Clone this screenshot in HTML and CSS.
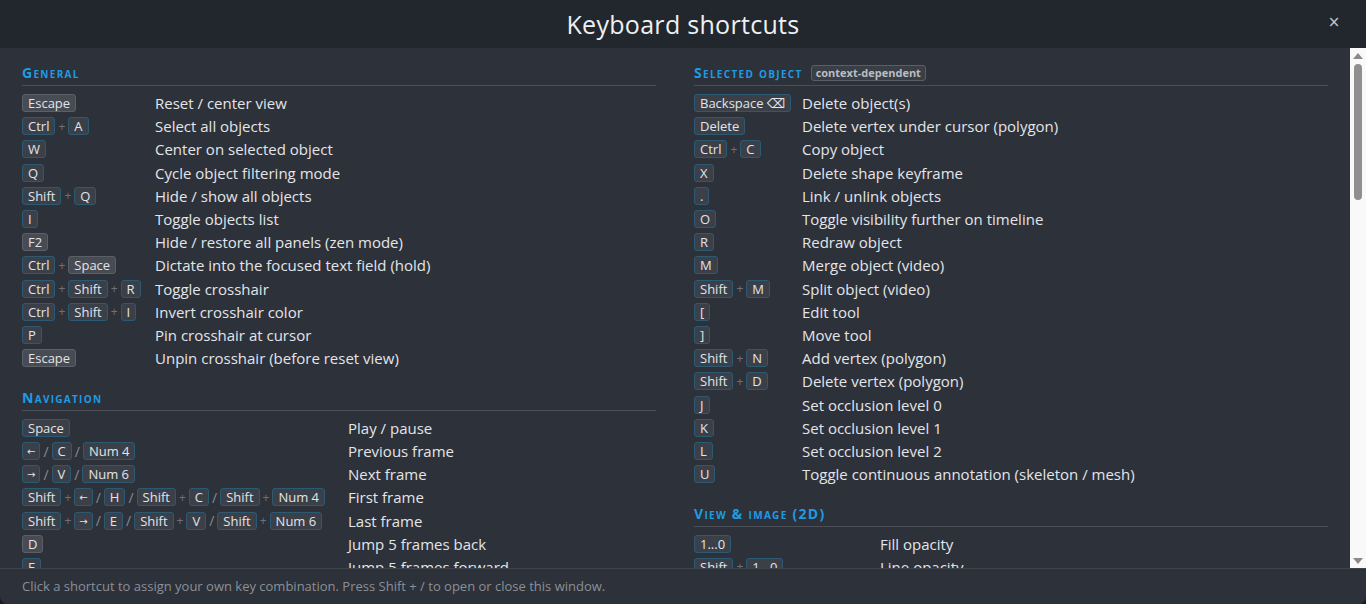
FILE: index.html
```html
<!DOCTYPE html>
<html lang="en">
<head>
<meta charset="utf-8">
<title>Keyboard shortcuts</title>
<link rel="stylesheet" href="styles.css">
</head>
<body>
<div class="modal">
  <header class="modal-head">
    <h1 class="modal-title">Keyboard shortcuts</h1>
    <button class="modal-close" type="button" aria-label="Close">×</button>
  </header>

  <div class="modal-main">
  <main class="modal-body">
    <div class="columns">
      <div class="column">

        <section class="group group-general">
          <h2 class="group-title">General</h2>
          <div class="rows">
            <div class="combo"><kbd class="key key-plain">Escape</kbd></div><div class="desc">Reset / center view</div>
            <div class="combo"><kbd class="key">Ctrl</kbd><span class="plus">+</span><kbd class="key">A</kbd></div><div class="desc">Select all objects</div>
            <div class="combo"><kbd class="key">W</kbd></div><div class="desc">Center on selected object</div>
            <div class="combo"><kbd class="key">Q</kbd></div><div class="desc">Cycle object filtering mode</div>
            <div class="combo"><kbd class="key">Shift</kbd><span class="plus">+</span><kbd class="key">Q</kbd></div><div class="desc">Hide / show all objects</div>
            <div class="combo"><kbd class="key">I</kbd></div><div class="desc">Toggle objects list</div>
            <div class="combo"><kbd class="key key-plain">F2</kbd></div><div class="desc">Hide / restore all panels (zen mode)</div>
            <div class="combo"><kbd class="key">Ctrl</kbd><span class="plus">+</span><kbd class="key key-plain">Space</kbd></div><div class="desc">Dictate into the focused text field (hold)</div>
            <div class="combo"><kbd class="key">Ctrl</kbd><span class="plus">+</span><kbd class="key">Shift</kbd><span class="plus">+</span><kbd class="key">R</kbd></div><div class="desc">Toggle crosshair</div>
            <div class="combo"><kbd class="key">Ctrl</kbd><span class="plus">+</span><kbd class="key">Shift</kbd><span class="plus">+</span><kbd class="key">I</kbd></div><div class="desc">Invert crosshair color</div>
            <div class="combo"><kbd class="key">P</kbd></div><div class="desc">Pin crosshair at cursor</div>
            <div class="combo"><kbd class="key key-plain">Escape</kbd></div><div class="desc">Unpin crosshair (before reset view)</div>
          </div>
        </section>

        <section class="group group-nav">
          <h2 class="group-title">Navigation</h2>
          <div class="rows">
            <div class="combo"><kbd class="key">Space</kbd></div><div class="desc">Play / pause</div>
            <div class="combo"><kbd class="key key-arrow">←</kbd><span class="or">/</span><kbd class="key">C</kbd><span class="or">/</span><kbd class="key">Num 4</kbd></div><div class="desc">Previous frame</div>
            <div class="combo"><kbd class="key key-arrow">→</kbd><span class="or">/</span><kbd class="key">V</kbd><span class="or">/</span><kbd class="key">Num 6</kbd></div><div class="desc">Next frame</div>
            <div class="combo"><kbd class="key">Shift</kbd><span class="plus">+</span><kbd class="key key-arrow">←</kbd><span class="or">/</span><kbd class="key">H</kbd><span class="or">/</span><kbd class="key">Shift</kbd><span class="plus">+</span><kbd class="key">C</kbd><span class="or">/</span><kbd class="key">Shift</kbd><span class="plus">+</span><kbd class="key">Num 4</kbd></div><div class="desc">First frame</div>
            <div class="combo"><kbd class="key">Shift</kbd><span class="plus">+</span><kbd class="key key-arrow">→</kbd><span class="or">/</span><kbd class="key">E</kbd><span class="or">/</span><kbd class="key">Shift</kbd><span class="plus">+</span><kbd class="key">V</kbd><span class="or">/</span><kbd class="key">Shift</kbd><span class="plus">+</span><kbd class="key">Num 6</kbd></div><div class="desc">Last frame</div>
            <div class="combo"><kbd class="key key-plain">D</kbd></div><div class="desc">Jump 5 frames back</div>
            <div class="combo"><kbd class="key">F</kbd></div><div class="desc">Jump 5 frames forward</div>
            <div class="combo"><kbd class="key">Home</kbd></div><div class="desc">Go to first frame of track</div>
            <div class="combo"><kbd class="key">End</kbd></div><div class="desc">Go to last frame of track</div>
            <div class="combo"><kbd class="key">Ctrl</kbd><span class="plus">+</span><kbd class="key">G</kbd></div><div class="desc">Go to frame</div>
            <div class="combo"><kbd class="key">Alt</kbd><span class="plus">+</span><kbd class="key key-arrow">←</kbd></div><div class="desc">Previous keyframe</div>
            <div class="combo"><kbd class="key">Alt</kbd><span class="plus">+</span><kbd class="key key-arrow">→</kbd></div><div class="desc">Next keyframe</div>
          </div>
        </section>

        <section class="group group-short">
          <h2 class="group-title">Playback</h2>
          <div class="rows">
            <div class="combo"><kbd class="key">Ctrl</kbd><span class="plus">+</span><kbd class="key key-arrow">↑</kbd></div><div class="desc">Increase playback speed</div>
            <div class="combo"><kbd class="key">Ctrl</kbd><span class="plus">+</span><kbd class="key key-arrow">↓</kbd></div><div class="desc">Decrease playback speed</div>
            <div class="combo"><kbd class="key">Ctrl</kbd><span class="plus">+</span><kbd class="key">0</kbd></div><div class="desc">Reset playback speed</div>
            <div class="combo"><kbd class="key">Shift</kbd><span class="plus">+</span><kbd class="key">Space</kbd></div><div class="desc">Play backwards</div>
            <div class="combo"><kbd class="key">B</kbd></div><div class="desc">Toggle frame bookmark</div>
            <div class="combo"><kbd class="key">Shift</kbd><span class="plus">+</span><kbd class="key">B</kbd></div><div class="desc">Next bookmark</div>
          </div>
        </section>

        <section class="group group-short">
          <h2 class="group-title">Timeline</h2>
          <div class="rows">
            <div class="combo"><kbd class="key">Ctrl</kbd><span class="plus">+</span><kbd class="key">K</kbd></div><div class="desc">Add keyframe</div>
            <div class="combo"><kbd class="key">Ctrl</kbd><span class="plus">+</span><kbd class="key">Shift</kbd><span class="plus">+</span><kbd class="key">K</kbd></div><div class="desc">Remove keyframe</div>
            <div class="combo"><kbd class="key">Alt</kbd><span class="plus">+</span><kbd class="key">O</kbd></div><div class="desc">Mark object outside</div>
            <div class="combo"><kbd class="key">Ctrl</kbd><span class="plus">+</span><kbd class="key">T</kbd></div><div class="desc">Toggle timeline panel</div>
            <div class="combo"><kbd class="key">Ctrl</kbd><span class="plus">+</span><kbd class="key">=</kbd></div><div class="desc">Zoom timeline in</div>
            <div class="combo"><kbd class="key">Ctrl</kbd><span class="plus">+</span><kbd class="key">-</kbd></div><div class="desc">Zoom timeline out</div>
            <div class="combo"><kbd class="key">Alt</kbd><span class="plus">+</span><kbd class="key">Home</kbd></div><div class="desc">Jump to object start</div>
            <div class="combo"><kbd class="key">Alt</kbd><span class="plus">+</span><kbd class="key">End</kbd></div><div class="desc">Jump to object end</div>
            <div class="combo"><kbd class="key">Ctrl</kbd><span class="plus">+</span><kbd class="key">J</kbd></div><div class="desc">Interpolate between keyframes</div>
            <div class="combo"><kbd class="key">Alt</kbd><span class="plus">+</span><kbd class="key">J</kbd></div><div class="desc">Propagate object forward</div>
          </div>
        </section>

        <section class="group group-short">
          <h2 class="group-title">Interface</h2>
          <div class="rows">
            <div class="combo"><kbd class="key">F1</kbd></div><div class="desc">Open help</div>
            <div class="combo"><kbd class="key">F3</kbd></div><div class="desc">Toggle labels panel</div>
            <div class="combo"><kbd class="key">F4</kbd></div><div class="desc">Toggle attributes panel</div>
            <div class="combo"><kbd class="key">F11</kbd></div><div class="desc">Full screen</div>
            <div class="combo"><kbd class="key">Ctrl</kbd><span class="plus">+</span><kbd class="key">,</kbd></div><div class="desc">Open settings</div>
            <div class="combo"><kbd class="key">Ctrl</kbd><span class="plus">+</span><kbd class="key">S</kbd></div><div class="desc">Save annotations</div>
            <div class="combo"><kbd class="key">Ctrl</kbd><span class="plus">+</span><kbd class="key">Z</kbd></div><div class="desc">Undo</div>
            <div class="combo"><kbd class="key">Ctrl</kbd><span class="plus">+</span><kbd class="key">Shift</kbd><span class="plus">+</span><kbd class="key">Z</kbd></div><div class="desc">Redo</div>
            <div class="combo"><kbd class="key">Ctrl</kbd><span class="plus">+</span><kbd class="key">Y</kbd></div><div class="desc">Redo (alternative)</div>
            <div class="combo"><kbd class="key">Shift</kbd><span class="plus">+</span><kbd class="key">/</kbd></div><div class="desc">Open / close this window</div>
          </div>
        </section>

      </div>
      <div class="column">

        <section class="group group-selected">
          <h2 class="group-title">Selected object <span class="badge">context-dependent</span></h2>
          <div class="rows">
            <div class="combo"><kbd class="key">Backspace ⌫</kbd></div><div class="desc">Delete object(s)</div>
            <div class="combo"><kbd class="key">Delete</kbd></div><div class="desc">Delete vertex under cursor (polygon)</div>
            <div class="combo"><kbd class="key">Ctrl</kbd><span class="plus">+</span><kbd class="key">C</kbd></div><div class="desc">Copy object</div>
            <div class="combo"><kbd class="key">X</kbd></div><div class="desc">Delete shape keyframe</div>
            <div class="combo"><kbd class="key">.</kbd></div><div class="desc">Link / unlink objects</div>
            <div class="combo"><kbd class="key">O</kbd></div><div class="desc">Toggle visibility further on timeline</div>
            <div class="combo"><kbd class="key">R</kbd></div><div class="desc">Redraw object</div>
            <div class="combo"><kbd class="key">M</kbd></div><div class="desc">Merge object (video)</div>
            <div class="combo"><kbd class="key">Shift</kbd><span class="plus">+</span><kbd class="key">M</kbd></div><div class="desc">Split object (video)</div>
            <div class="combo"><kbd class="key">[</kbd></div><div class="desc">Edit tool</div>
            <div class="combo"><kbd class="key">]</kbd></div><div class="desc">Move tool</div>
            <div class="combo"><kbd class="key">Shift</kbd><span class="plus">+</span><kbd class="key">N</kbd></div><div class="desc">Add vertex (polygon)</div>
            <div class="combo"><kbd class="key">Shift</kbd><span class="plus">+</span><kbd class="key">D</kbd></div><div class="desc">Delete vertex (polygon)</div>
            <div class="combo"><kbd class="key">J</kbd></div><div class="desc">Set occlusion level 0</div>
            <div class="combo"><kbd class="key">K</kbd></div><div class="desc">Set occlusion level 1</div>
            <div class="combo"><kbd class="key">L</kbd></div><div class="desc">Set occlusion level 2</div>
            <div class="combo"><kbd class="key">U</kbd></div><div class="desc">Toggle continuous annotation (skeleton / mesh)</div>
          </div>
        </section>

        <section class="group group-view">
          <h2 class="group-title">View &amp; image (2D)</h2>
          <div class="rows">
            <div class="combo"><kbd class="key">1...0</kbd></div><div class="desc">Fill opacity</div>
            <div class="combo"><kbd class="key">Shift</kbd><span class="plus">+</span><kbd class="key">1...0</kbd></div><div class="desc">Line opacity</div>
            <div class="combo"><kbd class="key">Ctrl</kbd><span class="plus">+</span><kbd class="key">Shift</kbd><span class="plus">+</span><kbd class="key">1...0</kbd></div><div class="desc">Image brightness</div>
            <div class="combo"><kbd class="key">Alt</kbd><span class="plus">+</span><kbd class="key">1...0</kbd></div><div class="desc">Image contrast</div>
            <div class="combo"><kbd class="key">G</kbd></div><div class="desc">Toggle grid</div>
            <div class="combo"><kbd class="key">T</kbd></div><div class="desc">Toggle labels</div>
            <div class="combo"><kbd class="key">+</kbd><span class="or">/</span><kbd class="key">-</kbd></div><div class="desc">Zoom in / out</div>
            <div class="combo"><kbd class="key">Ctrl</kbd><span class="plus">+</span><kbd class="key">0</kbd></div><div class="desc">Fit image to view</div>
          </div>
        </section>

        <section class="group group-short">
          <h2 class="group-title">Drawing tools</h2>
          <div class="rows">
            <div class="combo"><kbd class="key">Alt</kbd><span class="plus">+</span><kbd class="key">1</kbd></div><div class="desc">Rectangle tool</div>
            <div class="combo"><kbd class="key">Alt</kbd><span class="plus">+</span><kbd class="key">2</kbd></div><div class="desc">Polygon tool</div>
            <div class="combo"><kbd class="key">Alt</kbd><span class="plus">+</span><kbd class="key">3</kbd></div><div class="desc">Polyline tool</div>
            <div class="combo"><kbd class="key">Alt</kbd><span class="plus">+</span><kbd class="key">4</kbd></div><div class="desc">Points tool</div>
            <div class="combo"><kbd class="key">Alt</kbd><span class="plus">+</span><kbd class="key">5</kbd></div><div class="desc">Ellipse tool</div>
            <div class="combo"><kbd class="key">Alt</kbd><span class="plus">+</span><kbd class="key">6</kbd></div><div class="desc">Cuboid tool</div>
            <div class="combo"><kbd class="key">Alt</kbd><span class="plus">+</span><kbd class="key">7</kbd></div><div class="desc">Skeleton tool</div>
            <div class="combo"><kbd class="key">Alt</kbd><span class="plus">+</span><kbd class="key">8</kbd></div><div class="desc">Mask brush</div>
            <div class="combo"><kbd class="key">Alt</kbd><span class="plus">+</span><kbd class="key">9</kbd></div><div class="desc">Mask eraser</div>
            <div class="combo"><kbd class="key">Alt</kbd><span class="plus">+</span><kbd class="key">0</kbd></div><div class="desc">Magic wand</div>
            <div class="combo"><kbd class="key">Enter</kbd></div><div class="desc">Finish drawing</div>
            <div class="combo"><kbd class="key">Escape</kbd></div><div class="desc">Cancel drawing</div>
          </div>
        </section>

      </div>
    </div>
  </main>

  <div class="scrollbar" aria-hidden="true">
    <span class="sb-arrow sb-up"></span>
    <div class="sb-track"><div class="sb-thumb"></div></div>
    <span class="sb-arrow sb-down"></span>
  </div>
  </div>

  <footer class="modal-foot">Click a shortcut to assign your own key combination. Press Shift + / to open or close this window.</footer>
</div>
</body>
</html>
```

FILE: styles.css
```css
* {
  box-sizing: border-box;
}

html,
body {
  margin: 0;
  height: 100%;
  background: #1b1d22;
}

body {
  font-family: "Open Sans", "Noto Sans", "DejaVu Sans", sans-serif;
  color: #e3e5e9;
}

.modal {
  display: flex;
  flex-direction: column;
  height: 100vh;
  border-radius: 0 0 8px 8px;
  overflow: hidden;
  background: #2d3139;
}

/* title bar */
.modal-head {
  flex: 0 0 48px;
  position: relative;
  display: flex;
  align-items: center;
  justify-content: center;
  background: #22262d;
}

.modal-title {
  margin: 0;
  font-size: 25px;
  font-weight: 400;
  color: #eef0f3;
  letter-spacing: 0.3px;
}

.modal-close {
  position: absolute;
  right: 25px;
  top: 11px;
  width: 14px;
  height: 22px;
  padding: 0;
  border: 0;
  background: none;
  color: #c4c8ce;
  font: 400 15px/22px "DejaVu Sans", sans-serif;
  cursor: pointer;
}

/* list area with its scroll rail */
.modal-main {
  flex: 1 1 auto;
  display: flex;
  min-height: 0;
}

.modal-body {
  flex: 1 1 auto;
  overflow: hidden;
  background: #2d3139;
}

.scrollbar {
  flex: 0 0 16px;
  display: flex;
  flex-direction: column;
  background: #f9f9f9;
}

.sb-arrow {
  flex: 0 0 15px;
  display: flex;
  align-items: center;
  justify-content: center;
}

.sb-arrow::before {
  content: "";
  border-left: 5px solid transparent;
  border-right: 5px solid transparent;
}

.sb-up::before {
  border-bottom: 6px solid #8a8a8a;
  margin-top: 1px;
}

.sb-down::before {
  border-top: 6px solid #8a8a8a;
}

.sb-track {
  flex: 1 1 auto;
  padding: 1px 4px;
}

.sb-thumb {
  height: 136px;
  border-radius: 4px;
  background: #8f8f8f;
}

.columns {
  display: grid;
  grid-template-columns: 1fr 1fr;
  column-gap: 38px;
  padding: 16px 22px 24px;
}

.column {
  display: flex;
  flex-direction: column;
  gap: 19px;
}

.group-title {
  display: flex;
  align-items: center;
  margin: 0;
  height: 22px;
  padding-bottom: 3px;
  border-bottom: 1px solid #4a4f57;
  font-size: 14px;
  font-weight: 700;
  font-variant: small-caps;
  letter-spacing: 1.3px;
  line-height: 18px;
  color: #1e9be4;
}

.badge {
  margin-left: 8px;
  padding: 0 4px;
  height: 16px;
  line-height: 14px;
  border: 1px solid #5a5e66;
  border-radius: 3px;
  background: #3a3e45;
  color: #b9bdc4;
  font-size: 11px;
  font-weight: 700;
  font-variant: normal;
  letter-spacing: 0;
}

.rows {
  display: grid;
  grid-template-columns: var(--key-col) 1fr;
  grid-auto-rows: 23.2px;
  margin-top: 5.5px;
}

.group-general { --key-col: 133px; }
.group-nav { --key-col: 326px; }
.group-short { --key-col: 160px; }
.group-selected { --key-col: 108px; }
.group-view { --key-col: 186px; }

.combo {
  display: flex;
  align-items: center;
  white-space: nowrap;
}

.desc {
  display: flex;
  align-items: center;
  font-size: 15px;
  color: #e3e5e9;
  white-space: nowrap;
}

/* key caps */
.key {
  display: inline-block;
  height: 18px;
  padding: 0 5px;
  border: 1px solid #2c5a73;
  border-radius: 3px;
  background: #3b4048;
  color: #e1e4e8;
  font-family: inherit;
  font-size: 13px;
  line-height: 16px;
}

.key-plain {
  border-color: #5b5f67;
  background: #474b53;
}

.key-arrow {
  font-size: 10px;
  padding: 0 4px;
}

.plus {
  margin: 0 3px;
  font-size: 12px;
  color: #6d727a;
}

.or {
  margin: 0 3px;
  font-size: 14px;
  color: #868b93;
}

/* hint line */
.modal-foot {
  flex: 0 0 36px;
  display: flex;
  align-items: center;
  padding: 0 22px 2px;
  border-top: 1px solid #40454d;
  background: #2d3139;
  color: #8b9098;
  font-size: 13px;
}
```
